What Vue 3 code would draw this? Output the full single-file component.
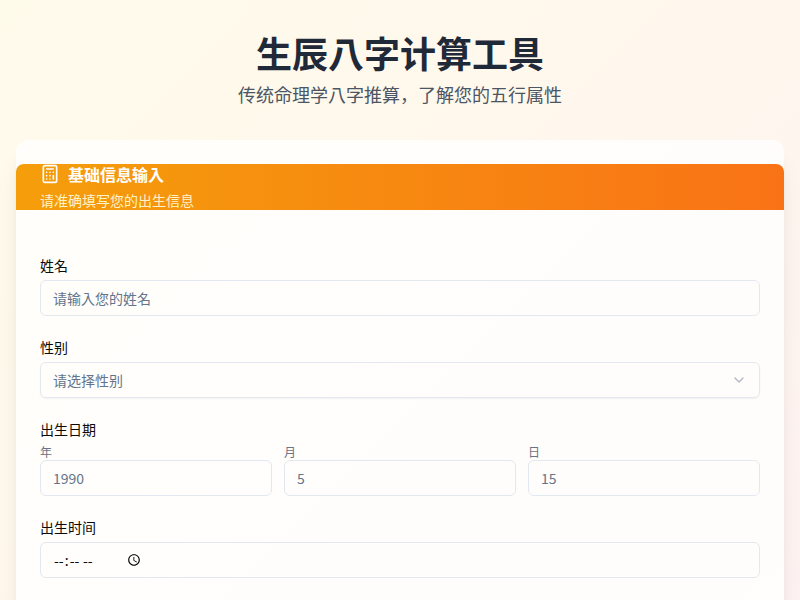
<script setup>
const dateFields = [
  { label: '年', value: '1990' },
  { label: '月', value: '5' },
  { label: '日', value: '15' },
]
</script>

<template>
  <div class="page">
    <header class="hero">
      <h1 class="title">生辰八字计算工具</h1>
      <p class="subtitle">传统命理学八字推算，了解您的五行属性</p>
    </header>

    <section class="card">
      <div class="card-head">
        <h2 class="card-title">
          <svg class="calc" viewBox="0 0 24 24" fill="none" stroke="currentColor" stroke-width="2" stroke-linecap="round" stroke-linejoin="round">
            <rect x="4" y="2" width="16" height="20" rx="2" />
            <line x1="8" x2="16" y1="6" y2="6" />
            <line x1="16" x2="16" y1="14" y2="18" />
            <path d="M16 10h.01M12 10h.01M8 10h.01M12 14h.01M8 14h.01M12 18h.01M8 18h.01" />
          </svg>
          基础信息输入
        </h2>
        <p class="card-desc">请准确填写您的出生信息</p>
      </div>

      <form class="form">
        <div class="field">
          <label class="label">姓名</label>
          <input class="input" type="text" placeholder="请输入您的姓名" />
        </div>

        <div class="field">
          <label class="label">性别</label>
          <button class="input select" type="button">
            <span>请选择性别</span>
            <svg class="chevron" viewBox="0 0 24 24" fill="none" stroke="currentColor" stroke-width="2" stroke-linecap="round" stroke-linejoin="round">
              <path d="m6 9 6 6 6-6" />
            </svg>
          </button>
        </div>

        <div class="field">
          <label class="label">出生日期</label>
          <div class="date-grid">
            <div v-for="d in dateFields" :key="d.label" class="date-cell">
              <label class="sublabel">{{ d.label }}</label>
              <input class="input" type="number" :placeholder="d.value" />
            </div>
          </div>
        </div>

        <div class="field">
          <label class="label">出生时间</label>
          <input class="input time" type="time" />
        </div>
      </form>
    </section>
  </div>
</template>

<style scoped>
.page {
  min-height: 100vh;
  box-sizing: border-box;
  padding: 32px 16px 16px;
  background: linear-gradient(135deg, #fffbeb 0%, #fff7ed 50%, #fef2f2 100%);
  font-family: "Noto Sans CJK JP", "Noto Sans", sans-serif;
}
.hero {
  text-align: center;
  margin-bottom: 32px;
}
.title {
  margin: 0 0 8px;
  font-size: 36px;
  line-height: 40px;
  font-weight: 700;
  color: #1f2937;
}
.subtitle {
  margin: 0;
  font-size: 18px;
  line-height: 28px;
  color: #4b5563;
}
.card {
  padding-top: 24px;
  border-radius: 12px;
  background: rgba(255, 255, 255, 0.8);
  box-shadow: 0 20px 25px -5px rgba(0, 0, 0, 0.1), 0 8px 10px -6px rgba(0, 0, 0, 0.1);
}
.card-head {
  height: 46px;
  padding: 0 24px;
  border-radius: 8px 8px 0 0;
  background: linear-gradient(90deg, #f59e0b, #f97316);
  color: #fff;
}
.card-title {
  display: flex;
  align-items: center;
  gap: 8px;
  margin: 0;
  font-size: 16px;
  line-height: 20px;
  font-weight: 700;
}
.calc {
  width: 20px;
  height: 20px;
}
.card-desc {
  margin: 6px 0 0;
  font-size: 14px;
  line-height: 20px;
  color: #fef3c7;
}
.form {
  display: flex;
  flex-direction: column;
  gap: 21px;
  padding: 45px 24px 48px;
}
.field {
  display: flex;
  flex-direction: column;
  gap: 5px;
}
.label {
  font-size: 14px;
  line-height: 20px;
  color: #0a0a0a;
}
.sublabel {
  font-size: 12px;
  line-height: 16px;
  color: #6b7280;
}
.input {
  box-sizing: border-box;
  width: 100%;
  height: 36px;
  padding: 4px 12px;
  border: 1px solid #e2e8f0;
  border-radius: 6px;
  background: transparent;
  font-family: inherit;
  font-size: 14px;
  color: #0a0a0a;
  outline: none;
}
.input::placeholder {
  color: #64748b;
}
.select {
  display: flex;
  align-items: center;
  justify-content: space-between;
  color: #64748b;
  box-shadow: 0 1px 2px rgba(0, 0, 0, 0.05);
  text-align: left;
}
.chevron {
  width: 16px;
  height: 16px;
  color: #64748b;
  opacity: 0.5;
}
.date-grid {
  display: grid;
  grid-template-columns: repeat(3, 1fr);
  gap: 12px;
}
.date-cell {
  display: flex;
  flex-direction: column;
}
.time {
  display: flex;
}
</style>

<style>
body {
  overflow: hidden;
}
</style>
